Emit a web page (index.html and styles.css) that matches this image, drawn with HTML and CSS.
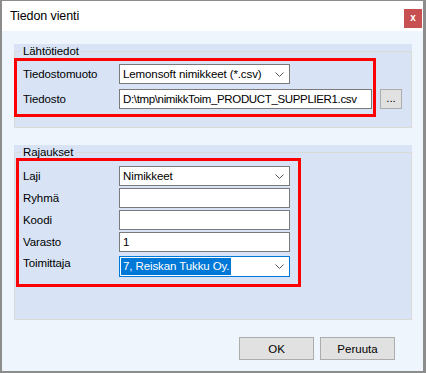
FILE: index.html
```html
<!DOCTYPE html>
<html lang="fi">
  <head>
    <meta charset="UTF-8" />
    <title>Tiedon vienti</title>
    <link rel="stylesheet" href="styles.css">
  </head>
  <body>
    <div class="window">
      <div class="titlebar">
        <span class="title">Tiedon vienti</span>
        <span class="close">x</span>
      </div>

      <div class="content">
        <div class="group group-source">
          <fieldset>
            <legend>Lähtötiedot</legend>
            <div class="rows">
              <div class="row">
                <label>Tiedostomuoto</label>
                <div class="combo">
                  <span>Lemonsoft nimikkeet (*.csv)</span>
                  <svg class="chevron" width="9" height="5" viewBox="0 0 9 5"><polyline points="0.5,0.5 4.5,4.5 8.5,0.5" /></svg>
                </div>
              </div>
              <div class="row">
                <label>Tiedosto</label>
                <div class="field field-wide">D:\tmp\nimikkToim_PRODUCT_SUPPLIER1.csv</div>
                <button class="browse">...</button>
              </div>
            </div>
          </fieldset>
          <div class="mark mark-source"></div>
        </div>

        <div class="group group-filter">
          <fieldset>
            <legend>Rajaukset</legend>
            <div class="rows rows-tight">
              <div class="row">
                <label>Laji</label>
                <div class="combo">
                  <span>Nimikkeet</span>
                  <svg class="chevron" width="9" height="5" viewBox="0 0 9 5"><polyline points="0.5,0.5 4.5,4.5 8.5,0.5" /></svg>
                </div>
              </div>
              <div class="row">
                <label>Ryhmä</label>
                <div class="field"></div>
              </div>
              <div class="row">
                <label>Koodi</label>
                <div class="field"></div>
              </div>
              <div class="row">
                <label>Varasto</label>
                <div class="field">1</div>
              </div>
              <div class="row row-top">
                <label>Toimittaja</label>
                <div class="combo combo-focus">
                  <span class="selected">7, Reiskan Tukku Oy.</span>
                  <svg class="chevron" width="9" height="5" viewBox="0 0 9 5"><polyline points="0.5,0.5 4.5,4.5 8.5,0.5" /></svg>
                </div>
              </div>
            </div>
          </fieldset>
          <div class="mark mark-filter"></div>
        </div>

        <div class="footer">
          <button class="btn">OK</button>
          <button class="btn">Peruuta</button>
        </div>
      </div>
    </div>
  </body>
</html>
```

FILE: styles.css
```css
body {
  margin: 0;
  font-family: "Liberation Sans", Arial, sans-serif;
  font-size: 11.5px;
  letter-spacing: -0.1px;
  color: #000;
}

.window {
  width: 426px;
  height: 373px;
  box-sizing: border-box;
  border-style: solid;
  border-color: #8c8c8c;
  border-width: 1px 3px 2px 2px;
  background: #eef5fd;
  display: flex;
  flex-direction: column;
}

.titlebar {
  height: 30px;
  background: #fff;
  display: flex;
  justify-content: space-between;
  align-items: flex-start;
  padding-left: 8px;
  padding-right: 1px;
}

.title {
  font-size: 12.5px;
  margin-top: 8px;
}

.close {
  width: 18px;
  height: 19px;
  margin-top: 8px;
  background: #c75050;
  color: #fff;
  font-weight: bold;
  font-size: 10px;
  line-height: 17px;
  text-align: center;
}

.content {
  padding: 13px 11px 0 12px;
}

.group {
  position: relative;
  background: #d8e4f6;
}

.group-source {
  height: 84px;
}

.group-filter {
  height: 175px;
  margin-top: 17px;
}

fieldset {
  margin: 0;
  padding: 0 8px;
  border: 1px solid #dcdad7;
  height: 100%;
  box-sizing: border-box;
  min-width: 0;
}

legend {
  padding: 0 2px;
  margin-left: -2px;
  line-height: 14px;
}

.rows {
  display: flex;
  flex-direction: column;
  gap: 4px;
  padding-top: 6px;
}

.rows-tight {
  gap: 2px;
  padding-top: 7px;
}

.row {
  display: flex;
  align-items: center;
}

.row-top {
  align-items: flex-start;
  margin-top: 2px;
}

.row-top label {
  padding-top: 1px;
}

label {
  width: 96px;
  flex: none;
}

.combo,
.field {
  width: 171px;
  height: 20px;
  box-sizing: border-box;
  border: 1px solid #7a7a7a;
  background: #fff;
  display: flex;
  align-items: center;
  justify-content: space-between;
  padding: 0 5px 0 3px;
  white-space: nowrap;
  overflow: hidden;
}

.field-wide {
  width: 253px;
  letter-spacing: -0.35px;
}

.combo-focus {
  height: 21px;
  border-color: #0078d7;
  padding-left: 1px;
}

.selected {
  background: #0078d7;
  color: #fff;
  padding: 1px 2px;
  line-height: 15px;
}

.chevron {
  flex: none;
}

.chevron polyline {
  fill: none;
  stroke: #555;
  stroke-width: 1;
}

.browse {
  width: 22px;
  height: 20px;
  margin: 1px 0 0 8px;
  padding: 0 0 3px;
  border: 1px solid #adadad;
  background: #e1e1e1;
  font: inherit;
  line-height: 12px;
  align-self: flex-start;
}

.mark {
  position: absolute;
  border: 3px solid #ff0000;
  box-sizing: border-box;
  pointer-events: none;
}

.mark-source {
  left: 0;
  top: 14px;
  width: 362px;
  height: 59px;
}

.mark-filter {
  left: 2px;
  top: 13px;
  width: 285px;
  height: 129px;
}

.footer {
  display: flex;
  justify-content: flex-end;
  gap: 6px;
  margin-top: 17px;
  padding-right: 17px;
}

.btn {
  width: 75px;
  height: 23px;
  border: 1px solid #adadad;
  background: #e1e1e1;
  font: inherit;
  padding: 0;
}
```
